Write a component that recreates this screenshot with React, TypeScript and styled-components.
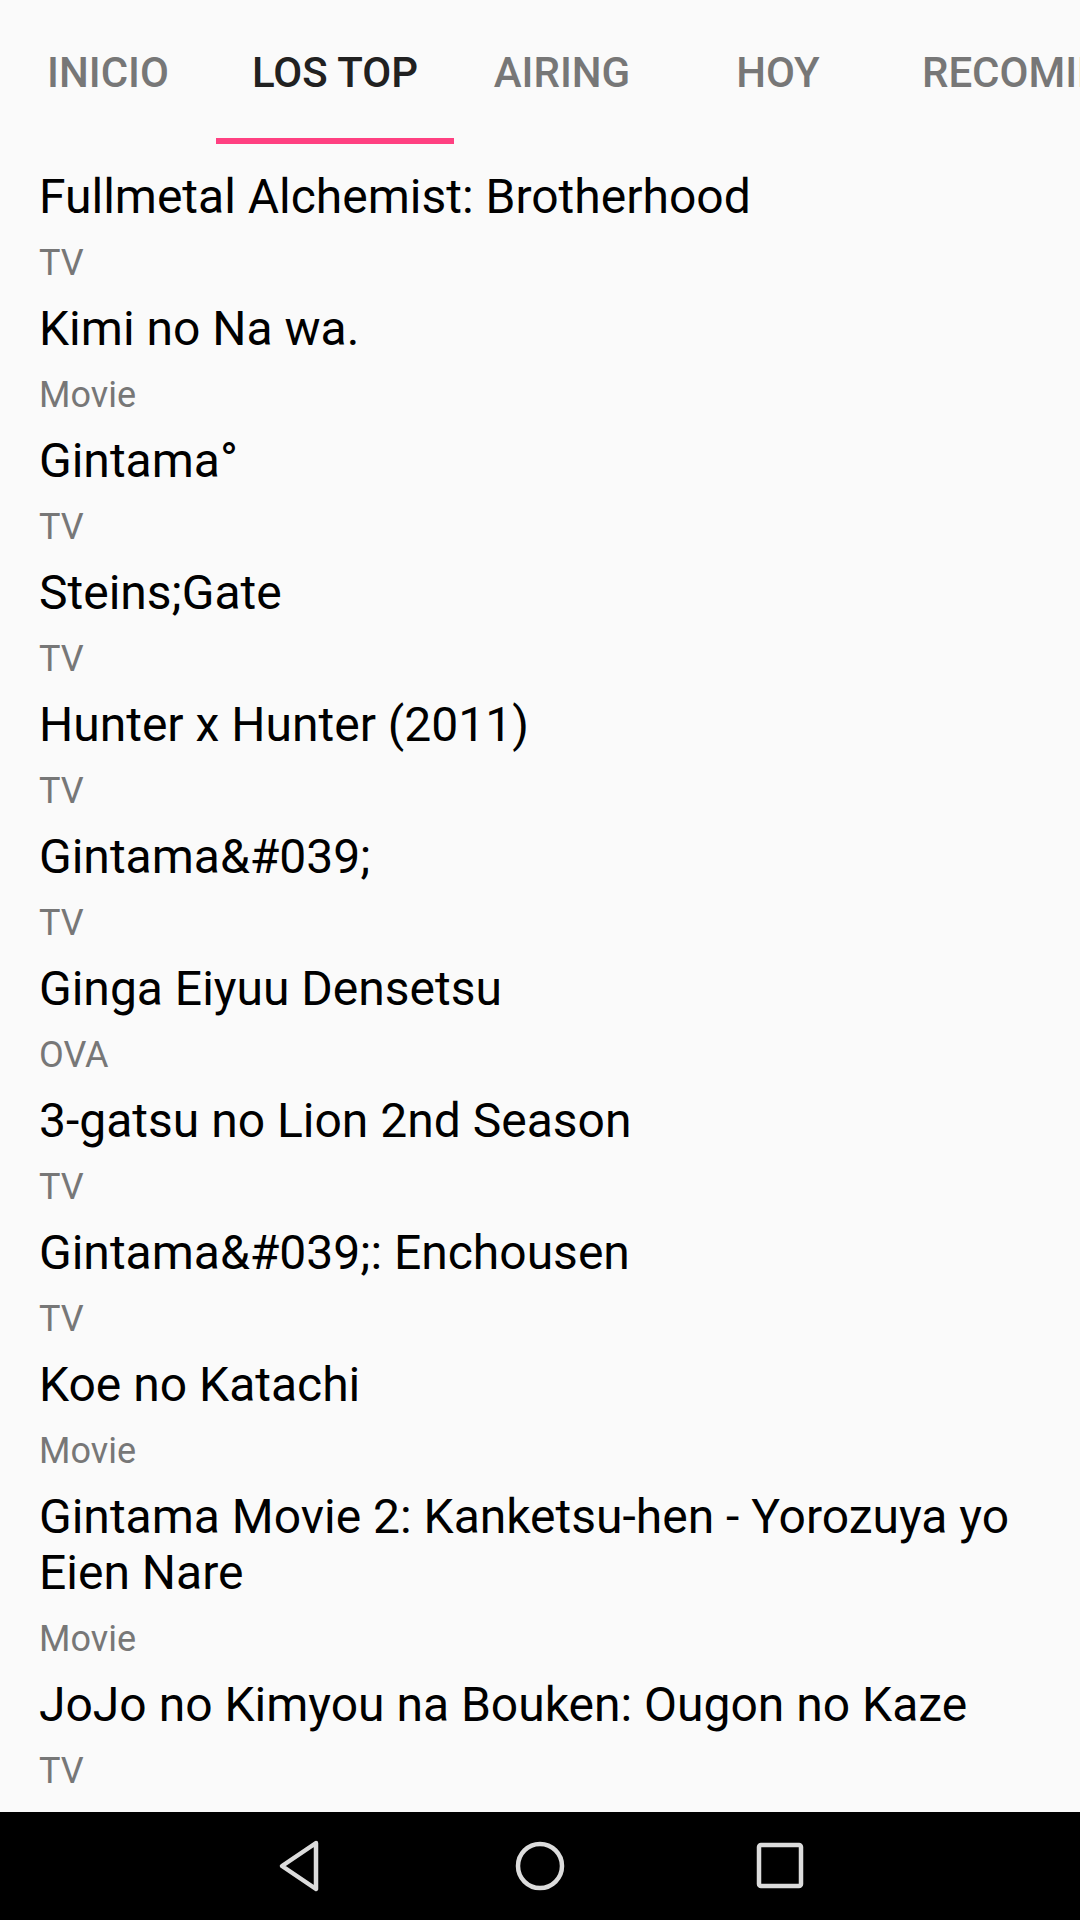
import styled, { createGlobalStyle } from "styled-components";

const GlobalStyle = createGlobalStyle`
  html, body {
    margin: 0;
    padding: 0;
    background: #fafafa;
  }
  * {
    box-sizing: border-box;
  }
`;

const tabs = ["Inicio", "Los Top", "Airing", "Hoy", "Recomienda"];

const animes = [
  { title: "Fullmetal Alchemist: Brotherhood", type: "TV" },
  { title: "Kimi no Na wa.", type: "Movie" },
  { title: "Gintama°", type: "TV" },
  { title: "Steins;Gate", type: "TV" },
  { title: "Hunter x Hunter (2011)", type: "TV" },
  { title: "Gintama&#039;", type: "TV" },
  { title: "Ginga Eiyuu Densetsu", type: "OVA" },
  { title: "3-gatsu no Lion 2nd Season", type: "TV" },
  { title: "Gintama&#039;: Enchousen", type: "TV" },
  { title: "Koe no Katachi", type: "Movie" },
  { title: "Gintama Movie 2: Kanketsu-hen - Yorozuya yo Eien Nare", type: "Movie" },
  { title: "JoJo no Kimyou na Bouken: Ougon no Kaze", type: "TV" },
];

function App() {
  const selected = 1;

  return (
    <>
      <GlobalStyle />
      <Screen>
        <TabBar>
          {tabs.map((tab, i) => (
            <Tab key={tab} active={i === selected}>
              {tab}
            </Tab>
          ))}
        </TabBar>

        <List>
          {animes.map((anime) => (
            <Item key={anime.title}>
              <Title>{anime.title}</Title>
              <Type>{anime.type}</Type>
            </Item>
          ))}
        </List>

        <NavBar>
          <NavButton>
            <svg width="48" height="54" viewBox="0 0 48 54">
              <path d="M40 4 L6 27 L40 50 Z" fill="none" stroke="#dcdcdc" strokeWidth="4.5" strokeLinejoin="round" />
            </svg>
          </NavButton>
          <NavButton>
            <svg width="54" height="54" viewBox="0 0 54 54">
              <circle cx="27" cy="27" r="22" fill="none" stroke="#dcdcdc" strokeWidth="4.5" />
            </svg>
          </NavButton>
          <NavButton>
            <svg width="50" height="50" viewBox="0 0 50 50">
              <rect x="4" y="4" width="42" height="41" rx="2" fill="none" stroke="#dcdcdc" strokeWidth="4.5" />
            </svg>
          </NavButton>
        </NavBar>
      </Screen>
    </>
  );
}

const Screen = styled.div`
  display: flex;
  flex-direction: column;
  width: 1080px;
  height: 1920px;
  overflow: hidden;
  background: #fafafa;
  font-family: Roboto, "Liberation Sans", sans-serif;
`;

const TabBar = styled.div`
  display: flex;
  flex-shrink: 0;
  height: 144px;
  overflow: hidden;
`;

const Tab = styled.div<{ active: boolean }>`
  position: relative;
  display: flex;
  align-items: center;
  justify-content: center;
  flex-shrink: 0;
  min-width: 216px;
  padding: 0 36px;
  font-size: 42px;
  font-weight: 500;
  text-transform: uppercase;
  white-space: nowrap;
  color: ${(props) => (props.active ? "#212121" : "#777777")};
  &:after {
    content: "";
    position: absolute;
    left: 0;
    right: 0;
    bottom: 0;
    height: 6px;
    background: ${(props) => (props.active ? "#ff4081" : "transparent")};
  }
`;

const List = styled.div`
  flex: 1;
  overflow: hidden;
  padding-top: 16px;
`;

const Item = styled.div`
  display: flex;
  flex-direction: column;
  padding: 8.5px 39px;
`;

const Title = styled.div`
  font-size: 48px;
  line-height: 56px;
  color: #000000;
`;

const Type = styled.div`
  margin-top: 17px;
  font-size: 36px;
  line-height: 42px;
  color: #777777;
`;

const NavBar = styled.div`
  display: flex;
  justify-content: center;
  align-items: center;
  flex-shrink: 0;
  height: 108px;
  background: #000000;
`;

const NavButton = styled.div`
  display: flex;
  align-items: center;
  justify-content: center;
  width: 240px;
  height: 100%;
`;

export default App;
